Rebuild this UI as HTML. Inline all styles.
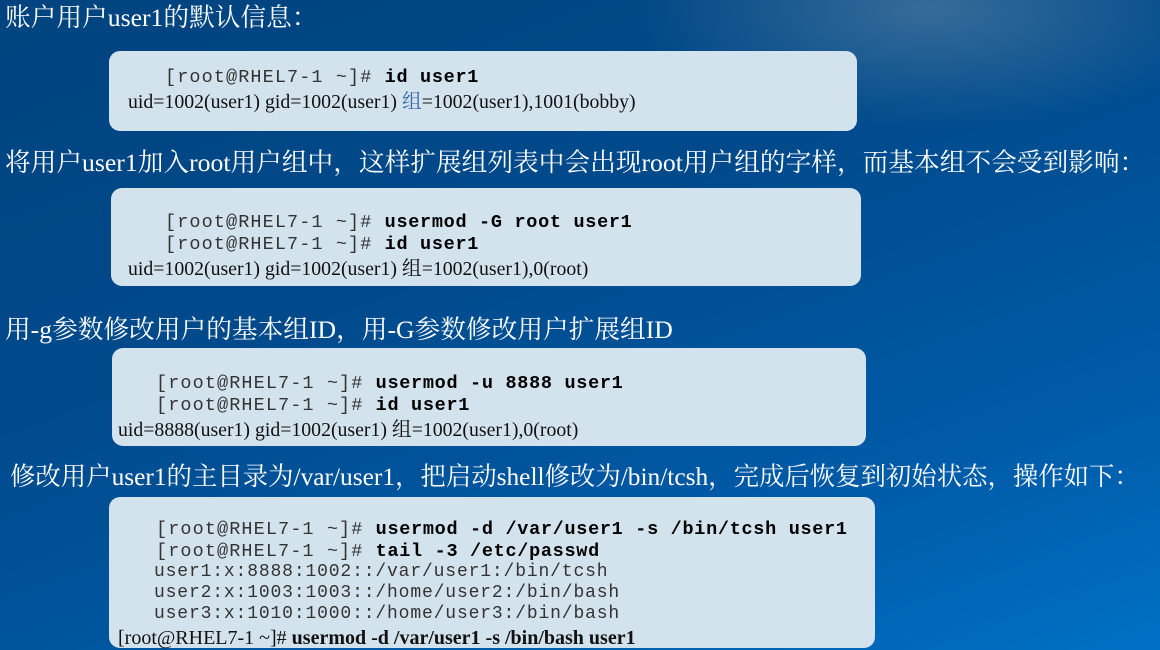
<!DOCTYPE html>
<html><head><meta charset="utf-8"><style>
body{margin:0;width:1160px;height:650px;overflow:hidden;position:relative;
background:radial-gradient(ellipse 300px 120px at 930px 10px,rgba(120,150,170,.45),rgba(0,0,0,0)),linear-gradient(160deg,#00437f 0%,#004a8c 40%,#005ba8 75%,#0070c4 100%);
font-family:"Liberation Serif","Noto Serif CJK SC",serif;}
.h{position:absolute;color:#fff;font-size:25.7px;white-space:nowrap;line-height:32px}
.b{position:absolute;background:#d3e3ee;border-radius:11px}
.m{position:absolute;font-family:"Liberation Mono",monospace;font-size:18.5px;color:#333;white-space:pre;line-height:22px;letter-spacing:1.1px}
.m b{color:#000;letter-spacing:0.7px}
.o{position:absolute;font-size:19.8px;color:#111;white-space:pre;line-height:22px}
.g{color:#3a6aa8}
</style></head><body>
<div class="h" style="left:5px;top:2px">账户用户user1的默认信息：</div>
<div class="b" style="left:109px;top:51px;width:748px;height:80px"></div>
<div class="m" style="left:165px;top:67px">[root@RHEL7-1 ~]# <b>id user1</b></div>
<div class="o" style="left:128px;top:91px">uid=1002(user1) gid=1002(user1) <span class="g">组</span>=1002(user1),1001(bobby)</div>

<div class="h" style="left:5px;top:147px">将用户user1加入root用户组中，这样扩展组列表中会出现root用户组的字样，而基本组不会受到影响：</div>
<div class="b" style="left:111px;top:188px;width:750px;height:98px"></div>
<div class="m" style="left:165px;top:212px">[root@RHEL7-1 ~]# <b>usermod -G root user1</b>
[root@RHEL7-1 ~]# <b>id user1</b></div>
<div class="o" style="left:128px;top:258px">uid=1002(user1) gid=1002(user1) 组=1002(user1),0(root)</div>

<div class="h" style="left:5px;top:314px">用-g参数修改用户的基本组ID，用-G参数修改用户扩展组ID</div>
<div class="b" style="left:112px;top:348px;width:754px;height:98px"></div>
<div class="m" style="left:156px;top:373px">[root@RHEL7-1 ~]# <b>usermod -u 8888 user1</b>
[root@RHEL7-1 ~]# <b>id user1</b></div>
<div class="o" style="left:118px;top:419px">uid=8888(user1) gid=1002(user1) 组=1002(user1),0(root)</div>

<div class="h" style="left:10px;top:461px;font-size:25.4px">修改用户user1的主目录为/var/user1，把启动shell修改为/bin/tcsh，完成后恢复到初始状态，操作如下：</div>
<div class="b" style="left:109px;top:497px;width:766px;height:151px"></div>
<div class="m" style="left:156px;top:519px">[root@RHEL7-1 ~]# <b>usermod -d /var/user1 -s /bin/tcsh user1</b>
[root@RHEL7-1 ~]# <b>tail -3 /etc/passwd</b></div>
<div class="m" style="left:154px;top:562px;font-size:18px;line-height:21px;letter-spacing:0.85px">user1:x:8888:1002::/var/user1:/bin/tcsh
user2:x:1003:1003::/home/user2:/bin/bash
user3:x:1010:1000::/home/user3:/bin/bash</div>
<div class="o" style="left:118px;top:627px;font-size:20px">[root@RHEL7-1 ~]# <b>usermod -d /var/user1 -s /bin/bash user1</b></div>
</body></html>
